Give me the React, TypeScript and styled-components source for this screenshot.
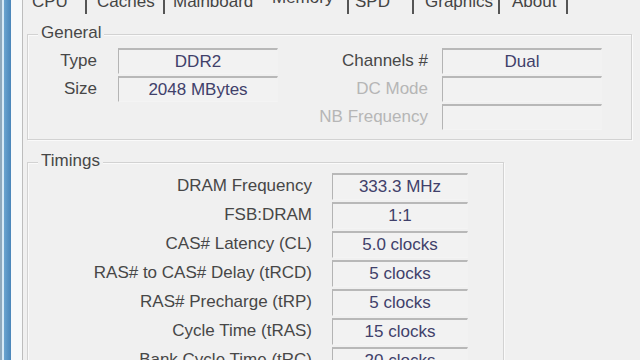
import React from 'react';
import styled, { createGlobalStyle } from 'styled-components';

const GlobalStyle = createGlobalStyle`
  html, body {
    margin: 0;
    padding: 0;
    background: #f0f0f0;
    overflow: hidden;
  }
  body {
    font-family: "Liberation Sans", Arial, sans-serif;
  }
`;

// ウィンドウ全体
const Screen = styled.div`
  display: flex;
  width: 640px;
  height: 360px;
  overflow: hidden;
`;

const WindowEdge = styled.div`
  width: 11px;
  flex: none;
  background: linear-gradient(
    to right,
    #8fa8bc 0px,
    #8fa8bc 2px,
    #d6e9f6 2px,
    #d6e9f6 4px,
    #6aa3cf 4px,
    #4a86ba 11px
  );
`;

const Gutter = styled.div`
  width: 11px;
  flex: none;
  background: #f7f9fa;
`;

const Main = styled.div`
  flex: 1;
  display: flex;
  flex-direction: column;
  background: #f0f0f0;
  border-left: 1px solid #bdbdbd;
  padding-left: 4px;
  overflow: hidden;
`;

const TabRow = styled.div`
  display: flex;
  flex: none;
  margin: -8px 0 0 -4px;
  height: 22px;
`;

const Tab = styled.div<{ $w: number; $pad: number; $sep?: boolean; $active?: boolean }>`
  box-sizing: border-box;
  width: ${p => p.$w}px;
  height: 22px;
  padding-left: ${p => p.$pad}px;
  border-right: 2px solid ${p => (p.$sep ? '#555' : 'transparent')};
  margin-right: ${p => (p.$sep ? 2 : 0)}px;
  font-size: 17px;
  line-height: ${p => (p.$active ? 12 : 20)}px;
  color: #444;
  white-space: nowrap;
`;

const GroupBox = styled.div<{ $w: number; $top: number }>`
  box-sizing: border-box;
  flex: none;
  width: ${p => p.$w}px;
  margin-top: ${p => p.$top}px;
  border: 1px solid #d2d2d2;
  box-shadow: inset 1px 1px 0 #fafafa, 1px 1px 0 #fafafa;
`;

const GroupTitle = styled.div`
  width: fit-content;
  margin: -12px 0 0 10px;
  padding: 0 3px;
  background: #f0f0f0;
  font-size: 17px;
  line-height: 20px;
  color: #474747;
`;

const GeneralGrid = styled.div`
  display: grid;
  grid-template-columns: 90px 160px 164px 160px;
  grid-auto-rows: 26px;
  row-gap: 2px;
  padding: 5px 0 9px 0;
`;

const TimingGrid = styled.div`
  display: grid;
  grid-template-columns: 304px 136px;
  grid-auto-rows: 27px;
  row-gap: 2px;
  padding: 2px 0 12px 0;
`;

const Label = styled.div<{ $gap: number; $dim?: boolean }>`
  padding-right: ${p => p.$gap}px;
  text-align: right;
  font-size: 17px;
  line-height: 26px;
  color: ${p => (p.$dim ? '#b6b6b6' : '#474747')};
  white-space: nowrap;
`;

const Field = styled.div`
  box-sizing: border-box;
  border-top: 2px solid #b8b8b8;
  border-left: 1px solid #b4b4b4;
  border-right: 1px solid #f2f2f2;
  border-bottom: 1px solid #f4f4f4;
  background: #f2f2f2;
  text-align: center;
  font-size: 17px;
  line-height: 23px;
  color: #40406a;
  white-space: nowrap;
`;

const tabs = [
  { name: 'CPU', w: 64, pad: 9, sep: true },
  { name: 'Caches', w: 76, pad: 8, sep: true },
  { name: 'Mainboard', w: 95, pad: 6, sep: false },
  { name: 'Memory', w: 87, pad: 10, sep: true, active: true },
  { name: 'SPD', w: 63, pad: 4, sep: true },
  { name: 'Graphics', w: 84, pad: 9, sep: true },
  { name: 'About', w: 66, pad: 10, sep: true },
];

const timings = [
  ['DRAM Frequency', '333.3 MHz'],
  ['FSB:DRAM', '1:1'],
  ['CAS# Latency (CL)', '5.0 clocks'],
  ['RAS# to CAS# Delay (tRCD)', '5 clocks'],
  ['RAS# Precharge (tRP)', '5 clocks'],
  ['Cycle Time (tRAS)', '15 clocks'],
  ['Bank Cycle Time (tRC)', '20 clocks'],
];

const App: React.FC = () => {
  return (
    <>
      <GlobalStyle />
      <Screen>
        <WindowEdge />
        <Gutter />
        <Main>
          <TabRow>
            {tabs.map(t => (
              <Tab key={t.name} $w={t.w} $pad={t.pad} $sep={t.sep} $active={t.active}>
                {t.name}
              </Tab>
            ))}
          </TabRow>

          <GroupBox $w={605} $top={20}>
            <GroupTitle>General</GroupTitle>
            <GeneralGrid>
              <Label $gap={21}>Type</Label>
              <Field>DDR2</Field>
              <Label $gap={14}>Channels #</Label>
              <Field>Dual</Field>

              <Label $gap={21}>Size</Label>
              <Field>2048 MBytes</Field>
              <Label $gap={14} $dim>DC Mode</Label>
              <Field />

              <div />
              <div />
              <Label $gap={14} $dim>NB Frequency</Label>
              <Field />
            </GeneralGrid>
          </GroupBox>

          <GroupBox $w={477} $top={22}>
            <GroupTitle>Timings</GroupTitle>
            <TimingGrid>
              {timings.map(([label, value]) => (
                <React.Fragment key={label}>
                  <Label $gap={20}>{label}</Label>
                  <Field>{value}</Field>
                </React.Fragment>
              ))}
            </TimingGrid>
          </GroupBox>
        </Main>
      </Screen>
    </>
  );
};

export default App;
